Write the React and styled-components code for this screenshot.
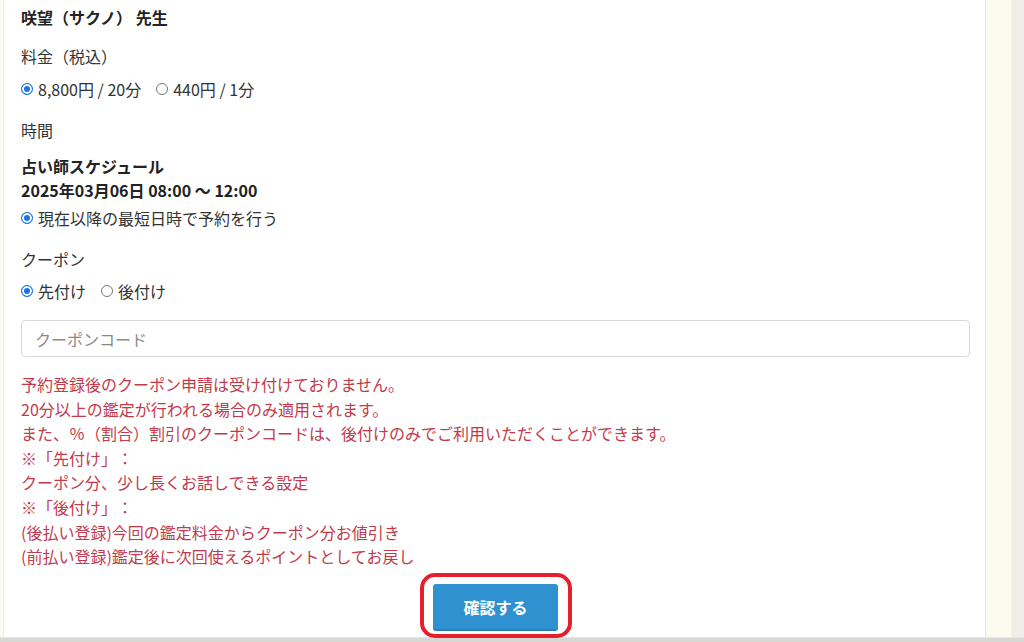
import React, { useState } from "react";
import styled, { createGlobalStyle, css } from "styled-components";

const GlobalStyle = createGlobalStyle`
  html, body {
    margin: 0;
    padding: 0;
    background: #fcfbf1;
  }

  body {
    font-family: "Noto Sans CJK JP", "Noto Sans", "Liberation Sans", sans-serif;
    color: #333;
    text-spacing-trim: space-all;
  }
`;

const Frame = styled.div`
  display: flex;
  flex-direction: column;
  width: 1024px;
  height: 642px;
  overflow: hidden;
`;

const Main = styled.div`
  display: flex;
  flex: 1;
  min-height: 0;
`;

const Gutter = styled.div`
  width: 3px;
  background: #fbfbf5;
`;

const Panel = styled.div`
  width: 983px;
  background: #fff;
  border-left: 1px solid #eeeee8;
  border-right: 1px solid #e8e8e2;
  padding: 5px 15px 0 17px;
  box-sizing: border-box;
  display: flex;
  flex-direction: column;
  font-size: 16px;
  line-height: 24px;
`;

const Margin = styled.div`
  width: 25px;
  background: #fcfbf0;
`;

const Track = styled.div`
  flex: 1;
  background: #efeee6;
  border-left: 1px solid #f3f2ea;
`;

const BottomBar = styled.div`
  height: 4px;
  background: #d7d7d5;
  border-top: 1px solid #e6e6e2;
`;

const Heading = styled.div`
  font-weight: 700;
  color: #222;
  margin-top: ${({ $gap }) => $gap || 0}px;
`;

const Label = styled.div`
  color: #333;
  margin-top: ${({ $gap }) => $gap || 0}px;
`;

const RadioRow = styled.div`
  display: flex;
  align-items: center;
  gap: 15px;
  margin-top: ${({ $gap }) => $gap || 0}px;
`;

const RadioItem = styled.label`
  display: flex;
  align-items: center;
  gap: 5px;
  cursor: pointer;
  color: #333;
`;

const Dot = styled.span`
  width: 12px;
  height: 12px;
  border-radius: 50%;
  box-sizing: border-box;
  border: 1px solid #767676;
  background: #fff;
  flex-shrink: 0;

  ${({ $checked }) =>
    $checked &&
    css`
      border: 1px solid #1a73e8;
      background: #1a73e8;
      box-shadow: inset 0 0 0 2px #fff;
    `};
`;

const Input = styled.input`
  margin-top: 17px;
  width: 100%;
  height: 37px;
  box-sizing: border-box;
  border: 1px solid #d8d8d8;
  border-radius: 4px;
  padding: 0 13px;
  font-family: inherit;
  font-size: 16px;
  color: #333;
  outline: none;

  &::placeholder {
    color: #8a8a8a;
  }
`;

const Notice = styled.div`
  margin-top: 15px;
  color: #c23a4b;
  line-height: 24.6px;
`;

const Actions = styled.div`
  display: flex;
  justify-content: center;
  margin-top: 15px;
`;

const ButtonWrap = styled.div`
  position: relative;
`;

const Button = styled.button`
  width: 125px;
  height: 47px;
  border: none;
  border-radius: 3px;
  background: #2f91d0;
  box-shadow: inset 0 -2px 0 rgba(0, 0, 0, 0.12);
  color: #fff;
  font-family: inherit;
  font-size: 16px;
  font-weight: 700;
  cursor: pointer;
`;

const Highlight = styled.div`
  position: absolute;
  top: -11px;
  left: -13px;
  right: -14px;
  bottom: -7px;
  border: 4px solid #e3202c;
  border-radius: 15px;
  pointer-events: none;
`;

function Radio({ checked, children, onSelect }) {
  return (
    <RadioItem onClick={onSelect}>
      <Dot $checked={checked} />
      <span>{children}</span>
    </RadioItem>
  );
}

const notes = [
  "予約登録後のクーポン申請は受け付けておりません。",
  "20分以上の鑑定が行われる場合のみ適用されます。",
  "また、％（割合）割引のクーポンコードは、後付けのみでご利用いただくことができます。",
  "※「先付け」：",
  "クーポン分、少し長くお話しできる設定",
  "※「後付け」：",
  "(後払い登録)今回の鑑定料金からクーポン分お値引き",
  "(前払い登録)鑑定後に次回使えるポイントとしてお戻し",
];

export default function App() {
  const [plan, setPlan] = useState("20");
  const [coupon, setCoupon] = useState("pre");

  return (
    <Frame>
      <GlobalStyle />
      <Main>
        <Gutter />
        <Panel>
          <Heading>咲望（サクノ） 先生</Heading>

          <Label $gap={15}>料金（税込）</Label>
          <RadioRow $gap={9}>
            <Radio checked={plan === "20"} onSelect={() => setPlan("20")}>
              8,800円 / 20分
            </Radio>
            <Radio checked={plan === "1"} onSelect={() => setPlan("1")}>
              440円 / 1分
            </Radio>
          </RadioRow>

          <Label $gap={17}>時間</Label>
          <Heading $gap={12}>占い師スケジュール</Heading>
          <Heading>2025年03月06日 08:00 〜 12:00</Heading>
          <RadioRow $gap={4}>
            <Radio checked>現在以降の最短日時で予約を行う</Radio>
          </RadioRow>

          <Label $gap={17}>クーポン</Label>
          <RadioRow $gap={8}>
            <Radio checked={coupon === "pre"} onSelect={() => setCoupon("pre")}>
              先付け
            </Radio>
            <Radio checked={coupon === "post"} onSelect={() => setCoupon("post")}>
              後付け
            </Radio>
          </RadioRow>

          <Input placeholder="クーポンコード" />

          <Notice>
            {notes.map((line) => (
              <div key={line}>{line}</div>
            ))}
          </Notice>

          <Actions>
            <ButtonWrap>
              <Button>確認する</Button>
              <Highlight />
            </ButtonWrap>
          </Actions>
        </Panel>
        <Margin />
        <Track />
      </Main>
      <BottomBar />
    </Frame>
  );
}
